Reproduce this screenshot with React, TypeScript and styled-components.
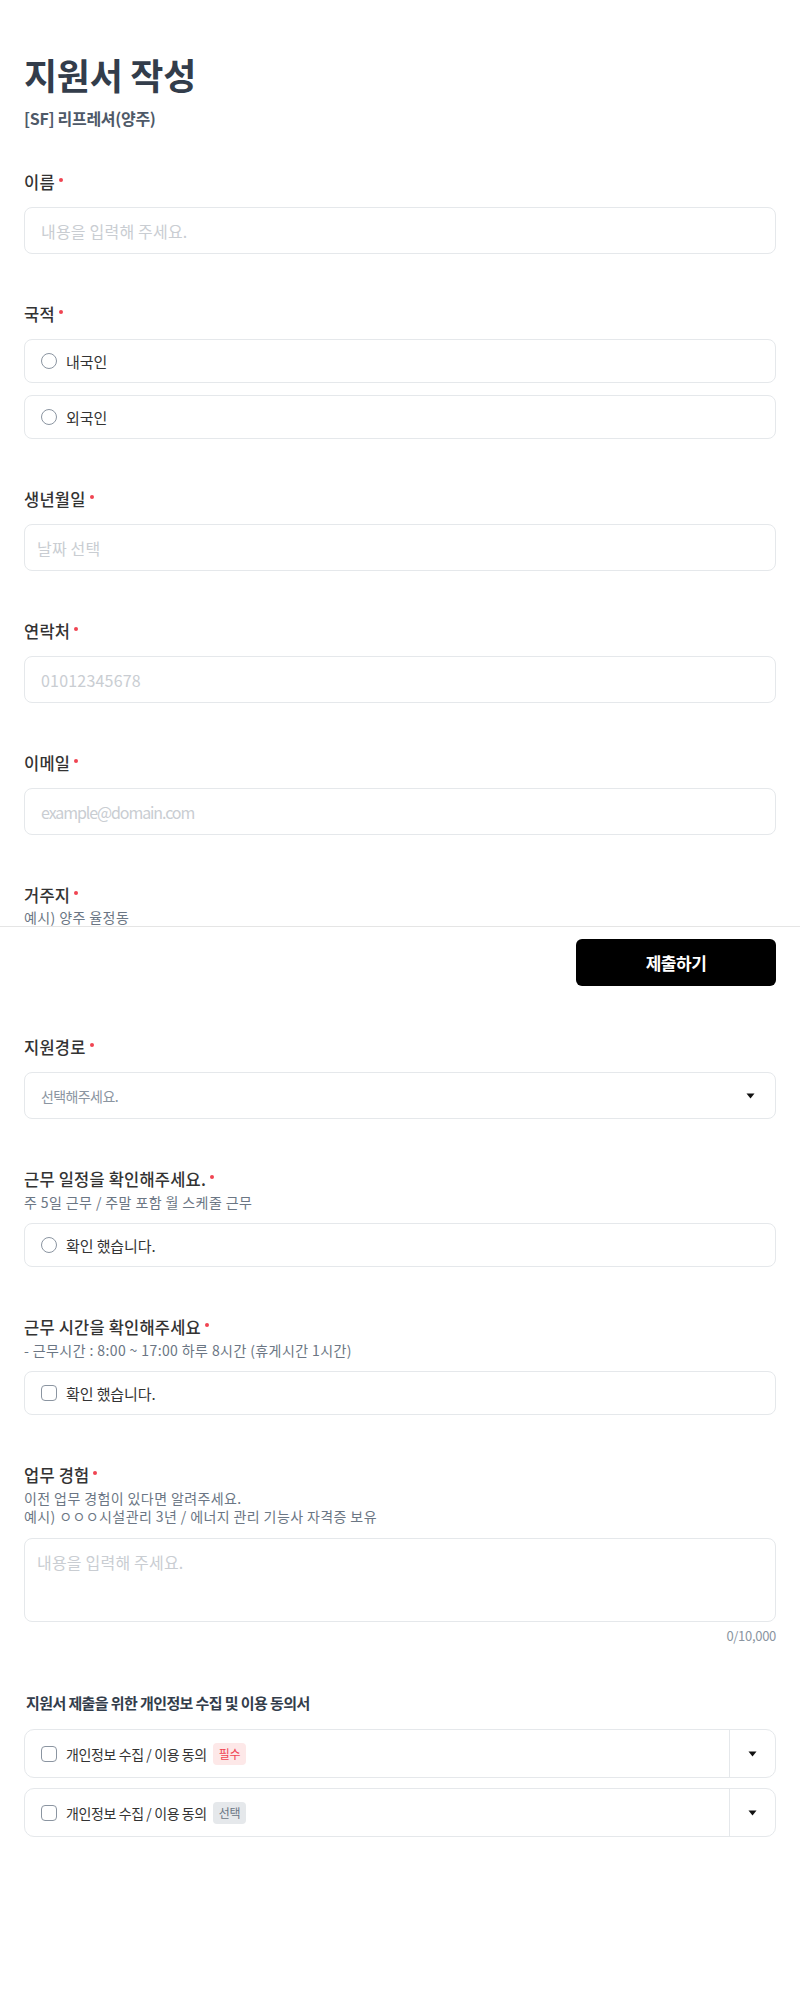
import React from 'react'
import styled, { createGlobalStyle } from 'styled-components'

const GlobalStyle = createGlobalStyle`
  html, body {
    margin: 0;
    padding: 0;
    background: #ffffff;
  }
  body {
    font-family: "Noto Sans CJK KR", "Noto Sans", sans-serif;
    color: #333d4b;
    -webkit-font-smoothing: antialiased;
  }
  * {
    box-sizing: border-box;
  }
`

const Page = styled.div`
  width: 800px;
  padding: 52px 0 155px;
`
const Section = styled.div`
  padding: 0 24px;
`
const Title = styled.h1`
  margin: 0;
  font-size: 36px;
  line-height: 44px;
  font-weight: 700;
  letter-spacing: -0.3px;
  color: #333d4b;
`
const SubTitle = styled.div`
  margin-top: 9px;
  margin-bottom: 39px;
  font-size: 16px;
  line-height: 26px;
  font-weight: 700;
  letter-spacing: -0.3px;
  color: #4e5968;
`
const Field = styled.div<{ mb?: string }>`
  margin-bottom: ${props => props.mb || '48px'};
`
const Label = styled.div`
  display: flex;
  align-items: flex-start;
  font-size: 16.5px;
  line-height: 24px;
  font-weight: 500;
  letter-spacing: 0.2px;
  color: #333333;
`
const Required = styled.span`
  display: inline-block;
  width: 4px;
  height: 4px;
  margin: 8px 0 0 4px;
  border-radius: 50%;
  background-color: #f04452;
`
const Desc = styled.div<{ mt?: string }>`
  margin-top: ${props => props.mt || '2px'};
  font-size: 14px;
  line-height: 18px;
  letter-spacing: 0.4px;
  color: #6b7684;
`
const Controls = styled.div<{ mt?: string }>`
  display: flex;
  flex-direction: column;
  gap: 12px;
  margin-top: ${props => props.mt || '13px'};
`
const Input = styled.input<{ pl?: string; ls?: string }>`
  width: 100%;
  height: 47px;
  padding: 0 ${props => props.pl || '16px'};
  border: 1px solid #e5e8eb;
  border-radius: 8px;
  font-family: inherit;
  font-size: 16px;
  letter-spacing: ${props => props.ls || '0.2px'};
  color: #333333;
  outline: none;
  &::placeholder {
    color: #c9cdd2;
  }
`
const TextArea = styled.textarea`
  display: block;
  width: 100%;
  height: 84px;
  padding: 12px 12px;
  border: 1px solid #e5e8eb;
  border-radius: 8px;
  font-family: inherit;
  font-size: 16px;
  line-height: 22px;
  letter-spacing: 0.2px;
  resize: none;
  outline: none;
  &::placeholder {
    color: #c9cdd2;
  }
`
const Counter = styled.div`
  margin-top: 5px;
  text-align: right;
  font-size: 13px;
  line-height: 18px;
  letter-spacing: -0.3px;
  color: #8b95a1;
`
const OptionBox = styled.label`
  display: flex;
  align-items: center;
  gap: 9px;
  height: 44px;
  padding: 0 16px;
  border: 1px solid #e5e8eb;
  border-radius: 8px;
  font-size: 15px;
  letter-spacing: -0.1px;
  color: #333333;
`
const Radio = styled.span`
  flex: none;
  width: 16px;
  height: 16px;
  border: 1.5px solid #8b95a1;
  border-radius: 50%;
`
const Check = styled.span`
  flex: none;
  width: 16px;
  height: 16px;
  border: 1.5px solid #8b95a1;
  border-radius: 4px;
`
const Select = styled.div`
  display: flex;
  align-items: center;
  justify-content: space-between;
  height: 47px;
  padding: 0 20px 0 16px;
  border: 1px solid #e5e8eb;
  border-radius: 8px;
  font-size: 14px;
  letter-spacing: -0.6px;
  color: #8b95a1;
`
const SubmitBar = styled.div`
  display: flex;
  justify-content: flex-end;
  margin-bottom: 36px;
  padding: 12px 24px 13px;
  border-top: 1px solid #e5e5e5;
`
const SubmitButton = styled.button`
  width: 200px;
  height: 47px;
  border: none;
  border-radius: 6px;
  background-color: #000000;
  font-family: inherit;
  font-size: 17px;
  font-weight: 700;
  letter-spacing: -0.5px;
  color: #ffffff;
`
const AgreeTitle = styled.div`
  margin-bottom: 15px;
  padding-left: 2px;
  font-size: 15px;
  line-height: 22px;
  font-weight: 700;
  letter-spacing: -0.6px;
  color: #333d4b;
`
const AgreeList = styled.div`
  display: flex;
  flex-direction: column;
  gap: 10px;
`
const AgreeRow = styled.div`
  display: grid;
  grid-template-columns: 1fr 46px;
  height: 49px;
  border: 1px solid #e5e8eb;
  border-radius: 10px;
`
const AgreeLabel = styled.label`
  display: flex;
  align-items: center;
  gap: 9px;
  padding: 0 16px;
  font-size: 14px;
  letter-spacing: -0.4px;
  color: #333333;
`
const Badge = styled.span<{ tone: 'red' | 'gray' }>`
  margin-left: -3px;
  padding: 0 6px;
  height: 22px;
  line-height: 22px;
  border-radius: 4px;
  font-size: 12px;
  letter-spacing: -0.3px;
  background-color: ${props => (props.tone === 'red' ? '#fde8e8' : '#e5e8eb')};
  color: ${props => (props.tone === 'red' ? '#f04452' : '#6b7684')};
`
const ToggleCell = styled.div`
  display: flex;
  align-items: center;
  justify-content: center;
  border-left: 1px solid #e5e8eb;
`

const Caret = () => (
  <svg width="9" height="6" viewBox="0 0 9 6">
    <path d="M0.5 0.5 H8.5 L4.5 5.5 Z" fill="#111111" />
  </svg>
)

const FieldLabel = ({ children }: { children: React.ReactNode }) => (
  <Label>
    {children}
    <Required />
  </Label>
)

const agreements = [
  { tag: '필수', tone: 'red' as const },
  { tag: '선택', tone: 'gray' as const },
]

const App = () => {
  return (
    <Page>
      <GlobalStyle />
      <Section>
        <Title>지원서 작성</Title>
        <SubTitle>[SF] 리프레셔(양주)</SubTitle>

        <Field>
          <FieldLabel>이름</FieldLabel>
          <Controls>
            <Input placeholder="내용을 입력해 주세요." />
          </Controls>
        </Field>

        <Field>
          <FieldLabel>국적</FieldLabel>
          <Controls>
            <OptionBox><Radio />내국인</OptionBox>
            <OptionBox><Radio />외국인</OptionBox>
          </Controls>
        </Field>

        <Field>
          <FieldLabel>생년월일</FieldLabel>
          <Controls>
            <Input pl="12px" placeholder="날짜 선택" />
          </Controls>
        </Field>

        <Field>
          <FieldLabel>연락처</FieldLabel>
          <Controls>
            <Input placeholder="01012345678" />
          </Controls>
        </Field>

        <Field>
          <FieldLabel>이메일</FieldLabel>
          <Controls>
            <Input ls="-1.1px" placeholder="example@domain.com" />
          </Controls>
        </Field>

        <Field mb="0">
          <FieldLabel>거주지</FieldLabel>
          <Desc mt="1px">예시) 양주 율정동</Desc>
        </Field>
      </Section>

      <SubmitBar>
        <SubmitButton>제출하기</SubmitButton>
      </SubmitBar>

      <Section>
        <Field>
          <FieldLabel>지원경로</FieldLabel>
          <Controls>
            <Select>
              선택해주세요.
              <Caret />
            </Select>
          </Controls>
        </Field>

        <Field>
          <FieldLabel>근무 일정을 확인해주세요.</FieldLabel>
          <Desc>주 5일 근무 / 주말 포함 월 스케줄 근무</Desc>
          <Controls mt="12px">
            <OptionBox><Radio />확인 했습니다.</OptionBox>
          </Controls>
        </Field>

        <Field>
          <FieldLabel>근무 시간을 확인해주세요</FieldLabel>
          <Desc>- 근무시간 : 8:00 ~ 17:00 하루 8시간 (휴게시간 1시간)</Desc>
          <Controls mt="12px">
            <OptionBox><Check />확인 했습니다.</OptionBox>
          </Controls>
        </Field>

        <Field mb="47px">
          <FieldLabel>업무 경험</FieldLabel>
          <Desc>
            이전 업무 경험이 있다면 알려주세요.
            <br />
            예시) ㅇㅇㅇ시설관리 3년 / 에너지 관리 기능사 자격증 보유
          </Desc>
          <Controls mt="13px">
            <TextArea placeholder="내용을 입력해 주세요." />
          </Controls>
          <Counter>0/10,000</Counter>
        </Field>

        <AgreeTitle>지원서 제출을 위한 개인정보 수집 및 이용 동의서</AgreeTitle>
        <AgreeList>
          {agreements.map(item => (
            <AgreeRow key={item.tag}>
              <AgreeLabel>
                <Check />
                개인정보 수집 / 이용 동의
                <Badge tone={item.tone}>{item.tag}</Badge>
              </AgreeLabel>
              <ToggleCell>
                <Caret />
              </ToggleCell>
            </AgreeRow>
          ))}
        </AgreeList>
      </Section>
    </Page>
  )
}

export default App
